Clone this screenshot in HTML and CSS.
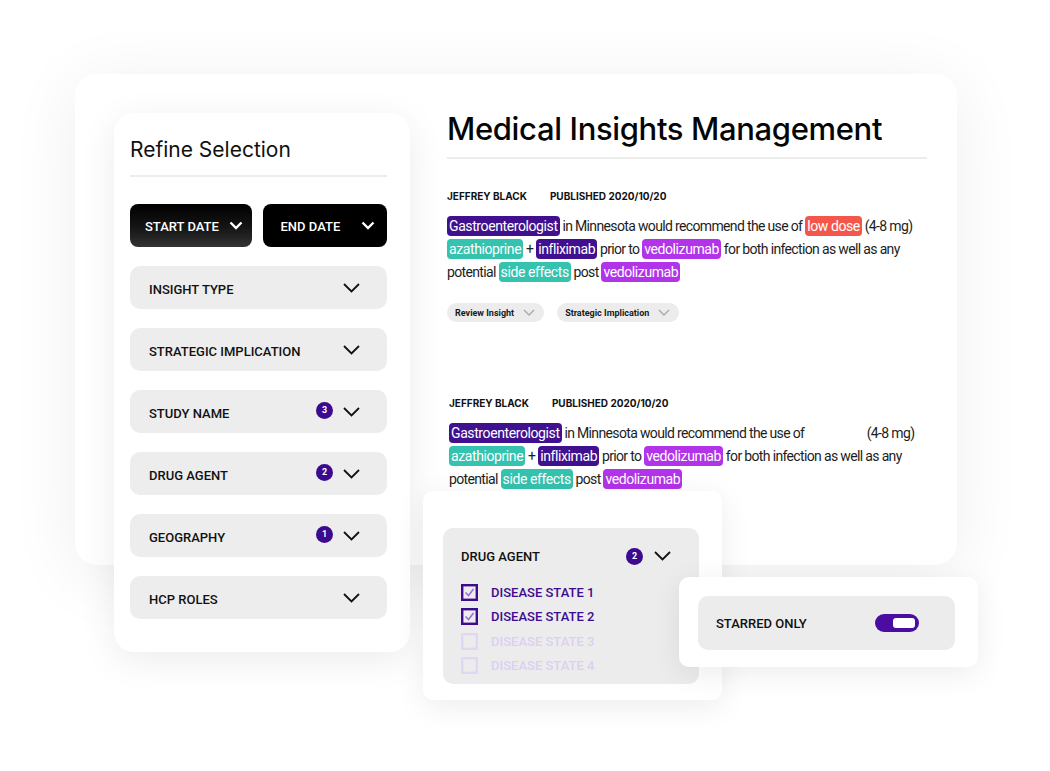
FILE: index.html
```html
<!DOCTYPE html>
<html lang="en">
<head>
    <meta charset="utf-8">
    <title>Medical Insights Management</title>
    <link rel="stylesheet" href="styles.css">
</head>
<body>
    <div class="stage">
        <div class="board">
            <aside class="refine">
                <h2 class="refine-title">Refine Selection</h2>
                <div class="dates">
                    <button class="date date-start">START DATE
                        <svg class="date-chev" viewBox="0 0 14 9"><polyline points="1.5,1.5 7,7 12.5,1.5"/></svg>
                    </button>
                    <button class="date date-end">END DATE
                        <svg class="date-chev" viewBox="0 0 14 9"><polyline points="1.5,1.5 7,7 12.5,1.5"/></svg>
                    </button>
                </div>

                <div class="filter">
                    <span class="filter-label">INSIGHT TYPE</span>
                    <svg class="chev" viewBox="0 0 17 10"><polyline points="1,1 8.5,8.5 16,1"/></svg>
                </div>
                <div class="filter">
                    <span class="filter-label">STRATEGIC IMPLICATION</span>
                    <svg class="chev" viewBox="0 0 17 10"><polyline points="1,1 8.5,8.5 16,1"/></svg>
                </div>
                <div class="filter">
                    <span class="filter-label">STUDY NAME</span>
                    <span class="badge">3</span>
                    <svg class="chev" viewBox="0 0 17 10"><polyline points="1,1 8.5,8.5 16,1"/></svg>
                </div>
                <div class="filter">
                    <span class="filter-label">DRUG AGENT</span>
                    <span class="badge">2</span>
                    <svg class="chev" viewBox="0 0 17 10"><polyline points="1,1 8.5,8.5 16,1"/></svg>
                </div>
                <div class="filter">
                    <span class="filter-label">GEOGRAPHY</span>
                    <span class="badge">1</span>
                    <svg class="chev" viewBox="0 0 17 10"><polyline points="1,1 8.5,8.5 16,1"/></svg>
                </div>
                <div class="filter">
                    <span class="filter-label">HCP ROLES</span>
                    <svg class="chev" viewBox="0 0 17 10"><polyline points="1,1 8.5,8.5 16,1"/></svg>
                </div>
            </aside>

            <main class="insights">
                <h1 class="title">Medical Insights Management</h1>

                <article class="insight">
                    <div class="meta"><span>JEFFREY BLACK</span><span>PUBLISHED 2020/10/20</span></div>
                    <p class="insight-text">
                        <span class="line"><mark class="hl hl-indigo">Gastroenterologist</mark> in Minnesota would recommend the use of <mark class="hl hl-red">low dose</mark> (4-8 mg)</span>
                        <span class="line"><mark class="hl hl-teal">azathioprine</mark> + <mark class="hl hl-indigo">infliximab</mark> prior to <mark class="hl hl-violet">vedolizumab</mark> for both infection as well as any</span>
                        <span class="line">potential <mark class="hl hl-teal">side effects</mark> post <mark class="hl hl-violet">vedolizumab</mark></span>
                    </p>
                    <div class="pills">
                        <span class="pill">Review Insight
                            <svg class="pill-chev" viewBox="0 0 12 7"><polyline points="1,1 6,6 11,1"/></svg>
                        </span>
                        <span class="pill">Strategic Implication
                            <svg class="pill-chev" viewBox="0 0 12 7"><polyline points="1,1 6,6 11,1"/></svg>
                        </span>
                    </div>
                </article>

                <article class="insight insight-second">
                    <div class="meta"><span>JEFFREY BLACK</span><span>PUBLISHED 2020/10/20</span></div>
                    <p class="insight-text">
                        <span class="line"><mark class="hl hl-indigo">Gastroenterologist</mark> in Minnesota would recommend the use of <mark class="hl hl-hidden">low dose</mark> (4-8 mg)</span>
                        <span class="line"><mark class="hl hl-teal">azathioprine</mark> + <mark class="hl hl-indigo">infliximab</mark> prior to <mark class="hl hl-violet">vedolizumab</mark> for both infection as well as any</span>
                        <span class="line">potential <mark class="hl hl-teal">side effects</mark> post <mark class="hl hl-violet">vedolizumab</mark></span>
                    </p>
                </article>
            </main>
        </div>

        <div class="popup popup-drug">
            <div class="popup-inner">
                <div class="drug-head">
                    <span class="filter-label">DRUG AGENT</span>
                    <span class="badge">2</span>
                    <svg class="chev" viewBox="0 0 17 10"><polyline points="1,1 8.5,8.5 16,1"/></svg>
                </div>
                <ul class="states">
                    <li class="state">
                        <svg class="box" viewBox="0 0 17 17"><rect x="1.2" y="1.2" width="14.6" height="14.6"/><polyline class="tick" points="4.5,8.5 7.5,11.5 12.5,5"/></svg>
                        DISEASE STATE 1
                    </li>
                    <li class="state">
                        <svg class="box" viewBox="0 0 17 17"><rect x="1.2" y="1.2" width="14.6" height="14.6"/><polyline class="tick" points="4.5,8.5 7.5,11.5 12.5,5"/></svg>
                        DISEASE STATE 2
                    </li>
                    <li class="state state-off">
                        <svg class="box" viewBox="0 0 17 17"><rect x="1.2" y="1.2" width="14.6" height="14.6"/></svg>
                        DISEASE STATE 3
                    </li>
                    <li class="state state-off">
                        <svg class="box" viewBox="0 0 17 17"><rect x="1.2" y="1.2" width="14.6" height="14.6"/></svg>
                        DISEASE STATE 4
                    </li>
                </ul>
            </div>
        </div>

        <div class="popup popup-starred">
            <div class="popup-inner starred-row">
                <span class="filter-label">STARRED ONLY</span>
                <span class="toggle"><span class="toggle-knob"></span></span>
            </div>
        </div>
    </div>
</body>
</html>
```

FILE: styles.css
```css
*{
    margin: 0;
    padding: 0;
    box-sizing: border-box;
}
body{
    background-color: #ffffff;
    font-family: Roboto, "Liberation Sans", sans-serif;
    color: #111;
}
.stage{
    position: relative;
    width: 1050px;
    height: 771px;
    overflow: hidden;
    padding-top: 74px;
    padding-left: 75px;
}

/* big white card */
.board{
    width: 882px;
    height: 491px;
    background-color: #fff;
    border-radius: 22px;
    box-shadow: 0 10px 70px rgba(0, 0, 0, 0.07);
    display: flex;
    gap: 37px;
    padding: 39px 30px 0 39px;
}

/* left filter panel */
.refine{
    flex-shrink: 0;
    width: 296px;
    height: 539px;
    background-color: #fff;
    border-radius: 20px;
    box-shadow: 0 8px 36px rgba(0, 0, 0, 0.08);
    padding: 24px 23px 0 16px;
    display: flex;
    flex-direction: column;
    position: relative;
    z-index: 1;
}
.refine-title{
    font-family: Inter, sans-serif;
    font-weight: 400;
    font-size: 21px;
    line-height: 26px;
    letter-spacing: 0;
    color: #111;
    padding-bottom: 12px;
    border-bottom: 2px solid #ececec;
}
.dates{
    display: flex;
    gap: 11px;
    margin-top: 27px;
    margin-bottom: 19px;
}
.date{
    flex: 1;
    height: 43px;
    border: none;
    border-radius: 8px;
    background-color: #000;
    color: #fff;
    font-family: Roboto, sans-serif;
    font-weight: 500;
    font-size: 13px;
    letter-spacing: 0;
    display: flex;
    align-items: center;
    padding-top: 2px;
}
.date-start{
    background: linear-gradient(180deg, #000 0%, #151515 55%, #333 100%);
    padding-left: 15px;
    gap: 10px;
}
.date-end{
    padding-left: 18px;
    gap: 21px;
}
.date-chev{
    width: 14px;
    height: 9px;
    fill: none;
    stroke: #fff;
    stroke-width: 2.4;
    margin-top: -3px;
}

.filter{
    height: 43px;
    background-color: #ededed;
    border-radius: 10px;
    display: flex;
    align-items: center;
    padding: 0 27px 0 19px;
    margin-bottom: 19px;
}
.filter-label{
    font-family: Roboto, sans-serif;
    font-weight: 500;
    font-size: 13px;
    letter-spacing: 0;
    color: #111;
    flex: 1;
    padding-top: 4px;
}
.chev{
    width: 17px;
    height: 10px;
    fill: none;
    stroke: #111;
    stroke-width: 1.8;
}
.badge{
    width: 17px;
    height: 17px;
    border-radius: 50%;
    background-color: #3b0a8e;
    color: #fff;
    font-size: 9px;
    font-weight: 700;
    display: flex;
    align-items: center;
    justify-content: center;
    margin-right: 10px;
    margin-top: -3px;
}

/* insights column */
.insights{
    flex: 1;
}
.title{
    font-family: Inter, sans-serif;
    font-weight: 500;
    font-size: 31px;
    line-height: 32px;
    letter-spacing: -0.35px;
    color: #050505;
    padding-bottom: 12px;
    border-bottom: 2px solid #ececec;
}
.insight{
    margin-top: 30px;
}
.insight-second{
    margin-top: 74px;
    padding-left: 2px;
}
.meta{
    display: flex;
    gap: 23px;
    font-family: Inter, sans-serif;
    font-weight: 700;
    font-size: 10px;
    line-height: 14px;
    color: #111;
}
.insight-text{
    margin-top: 12px;
    font-family: Roboto, sans-serif;
    font-size: 14px;
    line-height: 23px;
    letter-spacing: -0.65px;
    color: #1d1d1d;
}
.line{
    display: block;
    white-space: nowrap;
}
.hl{
    color: #fff;
    border-radius: 4px;
    padding: 2px 2px;
    letter-spacing: -0.4px;
}
.hl-indigo{
    background-color: #40108f;
}
.hl-red{
    background-color: #f4574a;
}
.hl-teal{
    background-color: #35c2ae;
}
.hl-violet{
    background-color: #b234e8;
}
.hl-hidden{
    background: none;
    color: transparent;
}
.pills{
    display: flex;
    gap: 13px;
    margin-top: 19px;
}
.pill{
    display: flex;
    align-items: center;
    gap: 9px;
    height: 19px;
    padding: 0 9px 0 8px;
    border-radius: 10px;
    background-color: #ececec;
    font-family: Roboto, sans-serif;
    font-weight: 700;
    font-size: 9px;
    color: #1a1a1a;
}
.pill-chev{
    width: 12px;
    height: 7px;
    fill: none;
    stroke: #aaa;
    stroke-width: 1.4;
}

/* floating cards over the board */
.popup{
    position: absolute;
    background-color: #fff;
    border-radius: 10px;
    box-shadow: 0 6px 30px rgba(0, 0, 0, 0.08);
    z-index: 2;
}
.popup-inner{
    background-color: #ececec;
    border-radius: 10px;
}
.popup-drug{
    left: 423px;
    top: 491px;
    width: 299px;
    height: 209px;
    padding: 37px 23px 16px 20px;
}
.popup-drug .popup-inner{
    height: 156px;
    padding: 0 28px 0 18px;
}
.drug-head{
    display: flex;
    align-items: center;
    height: 56px;
}
.drug-head .filter-label{
    padding-top: 0;
}
.drug-head .badge{
    margin-top: 0;
    margin-right: 11px;
}
.states{
    list-style: none;
    margin-top: -4px;
}
.state{
    display: flex;
    align-items: center;
    gap: 13px;
    height: 24.5px;
    font-family: Roboto, sans-serif;
    font-weight: 500;
    font-size: 13px;
    letter-spacing: 0;
    color: #3c0b8f;
}
.box{
    width: 17px;
    height: 17px;
    fill: none;
    stroke: #3c0b8f;
    stroke-width: 2.4;
}
.box .tick{
    stroke: #9d6fdc;
    stroke-width: 1.6;
}
.state-off{
    color: #dccff4;
}
.state-off .box{
    stroke: #e2d6f6;
}
.popup-starred{
    left: 679px;
    top: 577px;
    width: 299px;
    height: 90px;
    padding: 19px 23px 17px 19px;
    z-index: 3;
}
.starred-row{
    height: 54px;
    display: flex;
    align-items: center;
    padding: 0 36px 0 18px;
}
.starred-row .filter-label{
    padding-top: 0;
}
.toggle{
    width: 44px;
    height: 18px;
    border-radius: 9px;
    background-color: #4a0ca1;
    display: flex;
    align-items: center;
    justify-content: flex-end;
    padding-right: 4px;
}
.toggle-knob{
    width: 22px;
    height: 10px;
    border-radius: 3px;
    background-color: #fff;
}
```
